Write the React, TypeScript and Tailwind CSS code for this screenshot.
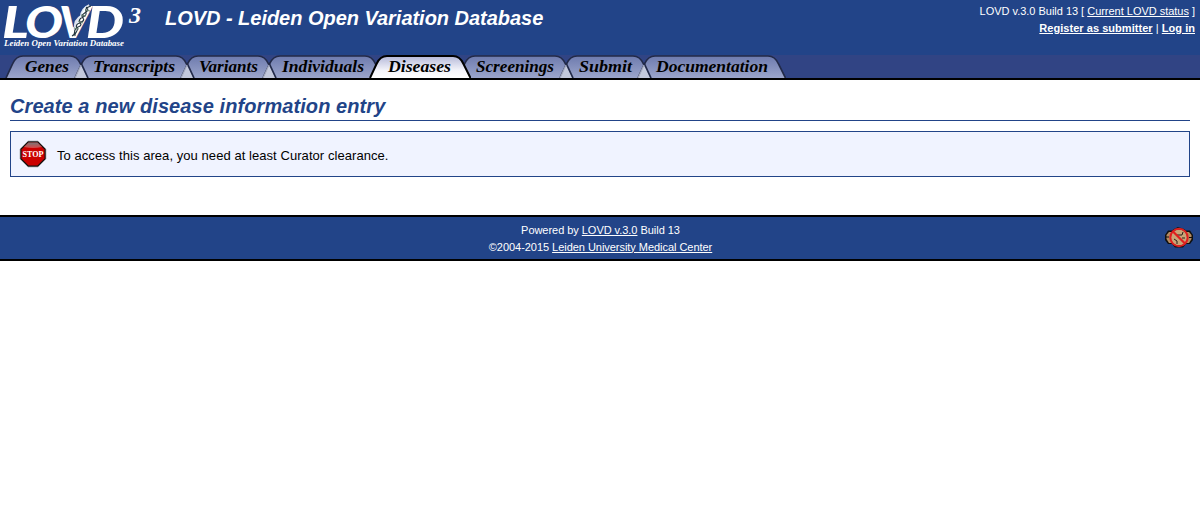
type Tab = { label: string; width: number; textX: number; textWidth: number; active?: boolean; notch?: boolean };

const tabs: Tab[] = [
  { label: 'Genes', width: 83, textX: 20, textWidth: 44 },
  { label: 'Transcripts', width: 120, textX: 19, textWidth: 82, notch: true },
  { label: 'Variants', width: 96, textX: 19, textWidth: 59, notch: true },
  { label: 'Individuals', width: 121, textX: 20, textWidth: 82, notch: true },
  { label: 'Diseases', width: 102, textX: 19, textWidth: 63, active: true },
  { label: 'Screenings', width: 116, textX: 19, textWidth: 78 },
  { label: 'Submit', width: 92, textX: 20, textWidth: 53, notch: true },
  { label: 'Documentation', width: 149, textX: 19, textWidth: 112, notch: true },
];

function TabShape({ tab }: { tab: Tab }) {
  const w = tab.width;
  const d = `M1 23 L7.5 9 Q11 1 18 1 H${w - 18} Q${w - 11} 1 ${w - 7.5} 9 L${w - 0.5} 23`;
  return (
    <svg width={w} height={23} viewBox={`0 0 ${w} 23`} className="block">
      <path d={d} fill={tab.active ? 'url(#tabActive)' : 'url(#tabIdle)'} stroke={tab.active ? '#000' : '#222a48'} strokeWidth={tab.active ? 2 : 1.7} />
      {tab.notch && <path d="M7 10 L13.5 23 H1 Z" fill="#c3c9dc" />}
      {tab.notch && <path d="M7 8 L14 23" stroke="#222a48" strokeWidth="1.7" />}
      {tab.notch && <path d="M7 10 L1 23" stroke="#a3a9be" strokeWidth="1.2" />}
      <text x={tab.textX} y="17" textLength={tab.textWidth} lengthAdjust="spacingAndGlyphs" className="font-['Liberation_Serif',serif] text-[16.5px] font-bold italic">
        {tab.label}
      </text>
    </svg>
  );
}

function Logo() {
  return (
    <svg width="150" height="52" viewBox="0 0 150 52" className="block shrink-0" fill="#fff">
      <g className="font-['Lato',sans-serif] text-[43px] font-black italic">
        <text x="2" y="38" textLength="27" lengthAdjust="spacingAndGlyphs">L</text>
        <text x="25" y="38" textLength="38" lengthAdjust="spacingAndGlyphs">O</text>
        <text x="59" y="38" textLength="31" lengthAdjust="spacingAndGlyphs">V</text>
        <text x="86" y="38" textLength="38" lengthAdjust="spacingAndGlyphs">D</text>
      </g>
      <path d="M90 7 Q83 10 83 17 Q76 21 77 28 Q73 31 73 35" fill="none" stroke="#fff" strokeWidth="6" opacity=".85" />
      <path d="M91 6 C80 9 91 14 83 17 C74 21 86 24 78 27 C71 31 78 33 72 36 M86 7 C93 12 78 13 83 18 C87 23 73 22 77 28 C79 32 74 32 75 36" fill="none" stroke="#25363e" strokeWidth="1.2" />
      <path d="M85 10 L90 11 M81 15 L86 16 M78 21 L83 23 M74 28 L79 29" stroke="#64806f" strokeWidth="1" />
      <text x="129" y="23" textLength="12" lengthAdjust="spacingAndGlyphs" className="font-['Liberation_Serif',serif] text-[24px] font-bold italic">3</text>
      <text x="4" y="46" textLength="120" lengthAdjust="spacingAndGlyphs" className="font-['Liberation_Serif',serif] text-[8.5px] font-bold italic">Leiden Open Variation Database</text>
    </svg>
  );
}

function StopIcon() {
  return (
    <svg width="28" height="28" viewBox="0 0 28 28" className="block">
      <path d="M9 1 H19 L27 9 V19 L19 27 H9 L1 19 V9 Z" fill="#111" stroke="#aaa" strokeWidth=".7" />
      <path d="M9.5 2.5 H18.5 L25.5 9.5 V18.5 L18.5 25.5 H9.5 L2.5 18.5 V9.5 Z" fill="#cb0000" />
      <path d="M9.5 2.5 H18.5 L23 7 Q14 9 5 7 Z" fill="url(#gloss)" />
      <text x="3.5" y="17" textLength="21" lengthAdjust="spacingAndGlyphs" fill="#fff" className="font-['Liberation_Serif',serif] text-[8.5px] font-bold">STOP</text>
    </svg>
  );
}

function NoBadge() {
  return (
    <svg width="30" height="24" viewBox="0 0 30 24" className="block">
      <path d="M1 9 L4 4.5 H8 L10 3 L14 1 L20 3 L22 4.5 H26 L29 9 V14 L26 18 H22 L19 21.5 H11 L8 18 H4 L1 14 Z" fill="#101010" />
      <path d="M2.5 9 L5 6 H9 V17 H5 L2.5 13 Z M21 6 H25 L27.5 9 V13 L25 17 H21 Z" fill="#b58c60" />
      <path d="M2 11 H5 M25 11.5 H28" stroke="#101010" strokeWidth="1" />
      <circle cx="15" cy="11.5" r="8" fill="#c9a577" />
      <path d="M13 9 H18 L19 6 M18 12 H21 M10 13 L13 15 V18" fill="none" stroke="#2a2018" strokeWidth="1" />
      <circle cx="15" cy="11.5" r="8.7" fill="none" stroke="#df2020" strokeWidth="2" />
      <path d="M9 5.5 L21 17.5" stroke="#df2020" strokeWidth="2.2" />
    </svg>
  );
}

export default function App() {
  return (
    <div className="min-h-[512px] bg-white font-['Liberation_Sans',Arial,sans-serif] text-black">
      <svg width="0" height="0" className="absolute">
        <defs>
          <linearGradient id="tabIdle" x1="0" y1="0" x2="0" y2="1"><stop offset="0" stopColor="#6e7bae" /><stop offset="1" stopColor="#9ba5cb" /></linearGradient>
          <linearGradient id="tabActive" x1="0" y1="0" x2="0" y2="1"><stop offset="0" stopColor="#b4b8d8" /><stop offset=".65" stopColor="#f4f4fa" /><stop offset="1" stopColor="#fff" /></linearGradient>
          <linearGradient id="gloss" x1="0" y1="0" x2="0" y2="1"><stop offset="0" stopColor="#777" /><stop offset="1" stopColor="#d94848" /></linearGradient>
        </defs>
      </svg>
      <header className="flex h-[55px] bg-[#224488] text-white">
        <Logo />
        <h1 className="ml-[15px] mt-[6px] text-[20px] leading-6 font-bold tracking-[-0.03px] italic whitespace-nowrap">LOVD - Leiden Open Variation Database</h1>
        <div className="ml-auto mr-[5px] pt-[3px] text-right text-[11px] leading-[17px]">
          <div className="tracking-[-0.02px]">LOVD v.3.0 Build 13 [ <a className="underline">Current LOVD status</a> ]</div>
          <div className="tracking-[0.04px]"><a className="font-bold underline">Register as submitter</a> | <a className="font-bold underline">Log in</a></div>
        </div>
      </header>
      <nav className="flex h-[25px] border-b-2 border-black bg-[#314484] pl-[5px]">
        {tabs.map((tab) => (
          <div key={tab.label} className={tab.active ? 'relative z-10 -mr-[14px] shrink-0' : '-mr-[14px] shrink-0'}>
            <TabShape tab={tab} />
          </div>
        ))}
      </nav>
      <main className="px-[10px] pt-[14px]">
        <h2 className="h-[27px] border-b border-[#224488] text-[20px] leading-6 font-bold tracking-[0.08px] italic text-[#224488]">Create a new disease information entry</h2>
        <div className="mt-[10px] flex h-[46px] items-center border border-[#224488] bg-[#f0f3ff] pl-[8px] text-[13px]">
          <StopIcon />
          <span className="ml-[10px] pt-[3px] tracking-[0.06px]">To access this area, you need at least Curator clearance.</span>
        </div>
      </main>
      <footer className="mt-[38px] grid h-[46px] grid-cols-[1fr_auto_1fr] items-center border-y-2 border-black bg-[#224488] text-[11px] leading-[17px] text-white">
        <div />
        <div className="pt-[1px] pl-[1px] text-center tracking-[-0.04px]">
          <div>Powered by <a className="underline">LOVD v.3.0</a> Build 13</div>
          <div>©2004-2015 <a className="underline">Leiden University Medical Center</a></div>
        </div>
        <div className="flex justify-end pr-[6px]"><NoBadge /></div>
      </footer>
    </div>
  );
}
